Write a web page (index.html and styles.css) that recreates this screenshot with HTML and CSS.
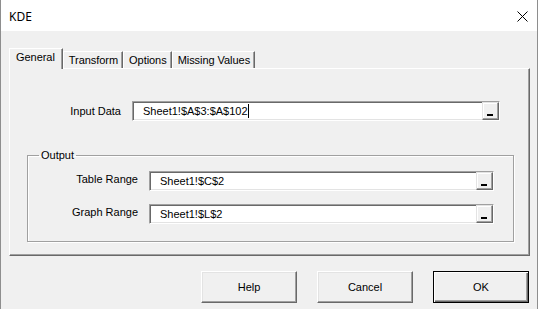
FILE: index.html
```html
<!DOCTYPE html>
<html>
<head>
	<meta charset="utf-8">
	<title>KDE</title>
	<link rel="stylesheet" href="styles.css">
</head>
<body>
	<div class="dlg">
		<div class="dlg__title">
			<span class="dlg__caption">KDE</span>
			<svg class="dlg__close" width="11" height="11" viewBox="0 0 11 11">
				<path d="M0.5 0.5L10.5 10.5M10.5 0.5L0.5 10.5" stroke="#000" stroke-width="1" fill="none"/>
			</svg>
		</div>

		<div class="dlg__client">
			<div class="tabs">
				<div class="tabs__item tabs__item_active">General</div>
				<div class="tabs__item">Transform</div>
				<div class="tabs__item">Options</div>
				<div class="tabs__item">Missing Values</div>
			</div>

			<div class="page">
				<div class="row row_top">
					<span class="row__label">Input Data</span>
					<div class="ref ref_wide">
						<span class="ref__txt">Sheet1!$A$3:$A$102<i class="ref__caret"></i></span>
						<span class="ref__btn"></span>
					</div>
				</div>

				<fieldset class="group">
					<legend class="group__legend">Output</legend>

					<div class="row row_grp">
						<span class="row__label">Table Range</span>
						<div class="ref">
							<span class="ref__txt">Sheet1!$C$2</span>
							<span class="ref__btn"></span>
						</div>
					</div>

					<div class="row row_grp row_next">
						<span class="row__label">Graph Range</span>
						<div class="ref">
							<span class="ref__txt">Sheet1!$L$2</span>
							<span class="ref__btn"></span>
						</div>
					</div>
				</fieldset>
			</div>

			<div class="actions">
				<button class="btn">Help</button>
				<button class="btn">Cancel</button>
				<button class="btn btn_default">OK</button>
			</div>
		</div>
	</div>
</body>
</html>
```

FILE: styles.css
```css
body {
	margin: 0;
	background: #fff;
	font-family: "Liberation Sans", Arial, sans-serif;
	font-size: 11px;
	color: #000;
}

.dlg {
	width: 536px;
	height: 309px;
	overflow: hidden;
	background: #f0f0f0;
	border-left: 1px solid #8e8e8e;
	border-right: 1px solid #8e8e8e;
}
	.dlg__title {
		height: 31px;
		display: flex;
		align-items: center;
		justify-content: space-between;
		padding: 0 9px 0 8px;
		background: #fff;
	}
		.dlg__caption {
			font-family: "Noto Sans", "Open Sans", sans-serif;
			font-size: 12px;
			margin-top: 1px;
		}
		.dlg__close {
			display: block;
			margin-top: 2px;
		}

	.dlg__client {
		padding: 17px 7px 0 8px;
	}


/* tabs */
.tabs {
	display: flex;
	align-items: flex-end;
	height: 20px;
}
	.tabs__item {
		height: 16px;
		line-height: 16px;
		padding: 0 4px 0 5px;
		border-top: 1px solid #fff;
		border-left: 1px solid #fff;
		border-right: 1px solid #696969;
		box-shadow: inset -1px 0 #a0a0a0;
		letter-spacing: -0.05px;
		white-space: nowrap;
	}
	.tabs__item_active {
		position: relative;
		z-index: 1;
		height: 20px;
		line-height: 17px;
		margin-bottom: -1px;
		padding: 0 7px 0 6px;
		background: #f0f0f0;
	}


/* page */
.page {
	height: 186px;
	border-top: 1px solid #fff;
	border-left: 1px solid #fff;
	border-right: 1px solid #696969;
	border-bottom: 1px solid #696969;
	box-shadow: inset -1px -1px #a0a0a0;
}

.row {
	display: flex;
	align-items: center;
}
	.row__label {
		text-align: right;
		flex: none;
		margin-right: 11px;
	}
	.row_top {
		margin-top: 32px;
	}
		.row_top .row__label { width: 111px; }

	.row_grp .row__label {
		width: 110px;
		padding-top: 2px;
		align-self: flex-start;
	}
	.row_next {
		margin-top: 13px;
	}


/* reference field */
.ref {
	width: 340px;
	height: 16px;
	display: flex;
	background: #fff;
	border-top: 1px solid #a0a0a0;
	border-left: 1px solid #a0a0a0;
	border-right: 1px solid #fff;
	border-bottom: 1px solid #fff;
	box-shadow: inset 1px 1px #696969, inset -1px -1px #e3e3e3;
	padding: 1px 1px 1px 2px;
}
	.ref_wide {
		width: 363px;
	}
	.ref__txt {
		flex: 1;
		line-height: 16px;
		padding-left: 8px;
		white-space: nowrap;
	}
	.ref__caret {
		display: inline-block;
		width: 1px;
		height: 14px;
		background: #000;
		vertical-align: -3px;
	}
	.ref__btn {
		position: relative;
		width: 15px;
		height: 16px;
		background: #f0f0f0;
		border-right: 1px solid #696969;
		border-bottom: 1px solid #696969;
		border-top: 1px solid #e3e3e3;
		border-left: 1px solid #e3e3e3;
		box-shadow: inset -1px -1px #a0a0a0, inset 1px 1px #fff;
		margin: -1px -1px -1px 0;
	}
		.ref__btn:after {
			content: "";
			position: absolute;
			left: 4px;
			bottom: 3px;
			width: 6px;
			height: 2px;
			background: #000;
		}


/* group */
.group {
	margin: 28px 0 0 17px;
	padding: 10px 0 17px 0;
	width: 485px;
	border: 1px solid #a0a0a0;
	box-shadow: inset 1px 1px #fff, 1px 1px #fff;
	min-width: 0;
}
	.group__legend {
		margin-left: 11px;
		padding: 0 2px;
	}


/* buttons */
.actions {
	display: flex;
	justify-content: flex-end;
	gap: 20px;
	margin-top: 15px;
	padding-right: 1px;
}
	.btn {
		width: 96px;
		height: 32px;
		font: inherit;
		color: #000;
		background: #f0f0f0;
		border: 1px solid;
		border-color: #fff #696969 #696969 #fff;
		box-shadow: inset -1px -1px #a0a0a0, inset 1px 1px #e3e3e3;
		padding: 0;
	}
	.btn_default {
		border: 1px solid #000;
		box-shadow: inset 1px 1px #fff, inset -1px -1px #696969, inset -2px -2px #a0a0a0;
	}
```
